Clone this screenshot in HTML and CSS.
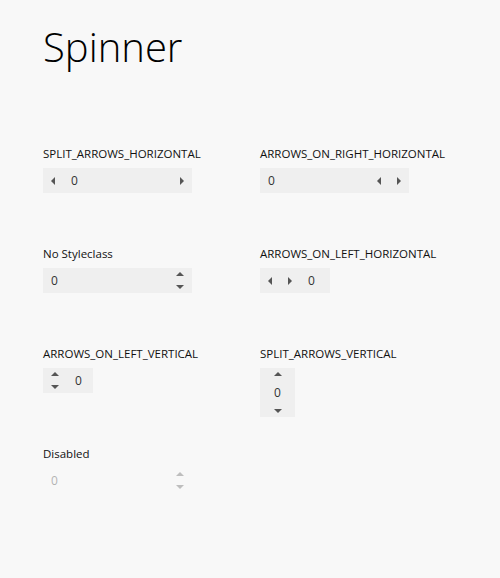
FILE: index.html
```html
<!DOCTYPE html>
<html lang="en">
	<head>
		<meta charset="UTF-8" />
		<meta name="viewport" content="width=device-width, initial-scale=1.0" />
		<title>Spinner</title>
		<link rel="stylesheet" href="styles.css">
	</head>
	<body>
		<div class="page">
			<h1 class="title">Spinner</h1>
			<div class="grid">
				<div class="cell">
					<div class="label">SPLIT_ARROWS_HORIZONTAL</div>
					<div class="spinner wide">
						<span class="btn h"><i class="arrow left"></i></span>
						<span class="value">0</span>
						<span class="btn h"><i class="arrow right"></i></span>
					</div>
				</div>
				<div class="cell">
					<div class="label">ARROWS_ON_RIGHT_HORIZONTAL</div>
					<div class="spinner wide">
						<span class="value">0</span>
						<span class="btn h"><i class="arrow left"></i></span>
						<span class="btn h"><i class="arrow right"></i></span>
					</div>
				</div>
				<div class="cell">
					<div class="label">No Styleclass</div>
					<div class="spinner wide">
						<span class="value">0</span>
						<span class="btns">
							<span class="btn v"><i class="arrow up"></i></span>
							<span class="btn v"><i class="arrow down"></i></span>
						</span>
					</div>
				</div>
				<div class="cell">
					<div class="label">ARROWS_ON_LEFT_HORIZONTAL</div>
					<div class="spinner small">
						<span class="btn h"><i class="arrow left"></i></span>
						<span class="btn h"><i class="arrow right"></i></span>
						<span class="value">0</span>
					</div>
				</div>
				<div class="cell">
					<div class="label">ARROWS_ON_LEFT_VERTICAL</div>
					<div class="spinner tiny">
						<span class="btns">
							<span class="btn v"><i class="arrow up"></i></span>
							<span class="btn v"><i class="arrow down"></i></span>
						</span>
						<span class="value">0</span>
					</div>
				</div>
				<div class="cell">
					<div class="label">SPLIT_ARROWS_VERTICAL</div>
					<div class="spinner column">
						<span class="btn v"><i class="arrow up"></i></span>
						<span class="value">0</span>
						<span class="btn v"><i class="arrow down"></i></span>
					</div>
				</div>
				<div class="cell">
					<div class="label">Disabled</div>
					<div class="spinner wide disabled">
						<span class="value">0</span>
						<span class="btns">
							<span class="btn v"><i class="arrow up"></i></span>
							<span class="btn v"><i class="arrow down"></i></span>
						</span>
					</div>
				</div>
			</div>
		</div>
	</body>
</html>
```

FILE: styles.css
```css
body {
	margin: 0;
	background-color: #f8f8f8;
	font-family: "Open Sans", "Noto Sans", sans-serif;
	color: #111;
}
.page {
	padding: 23px 43px;
}
.title {
	margin: 0;
	font-size: 40px;
	font-weight: 300;
	line-height: 48px;
	color: #000;
}
.grid {
	display: grid;
	grid-template-columns: 217px 1fr;
	grid-auto-rows: 100px;
	margin-top: 75px;
}
.label {
	font-size: 11.5px;
	line-height: 16px;
	margin-bottom: 6px;
}
.spinner {
	display: flex;
	height: 25px;
	background-color: #efefef;
	font-size: 12px;
	color: #333;
}
.spinner.wide {
	width: 149px;
}
.spinner.small {
	width: 70px;
}
.spinner.tiny {
	width: 50px;
}
.spinner.column {
	flex-direction: column;
	width: 35px;
	height: 49px;
}
/* disabled: no field background, everything faded */
.spinner.disabled {
	background-color: transparent;
	opacity: 0.35;
}
.value {
	flex: 1;
	display: flex;
	align-items: center;
	padding-left: 8px;
}
.column .value {
	justify-content: center;
	padding-left: 0;
}
.btns {
	display: flex;
	flex-direction: column;
	width: 24px;
}
.btn {
	display: flex;
	align-items: center;
	justify-content: center;
}
.btn.h {
	width: 20px;
}
.btn.v {
	flex: 1;
}
.column .btn.v {
	flex: 0 0 12px;
}
/* triangles */
.arrow {
	width: 0;
	height: 0;
	border-style: solid;
	border-color: transparent;
}
.arrow.left {
	border-width: 4px 4.5px 4px 0;
	border-right-color: #555;
}
.arrow.right {
	border-width: 4px 0 4px 4.5px;
	border-left-color: #555;
}
.arrow.up {
	border-width: 0 4px 4.5px 4px;
	border-bottom-color: #555;
}
.arrow.down {
	border-width: 4.5px 4px 0 4px;
	border-top-color: #555;
}
```
